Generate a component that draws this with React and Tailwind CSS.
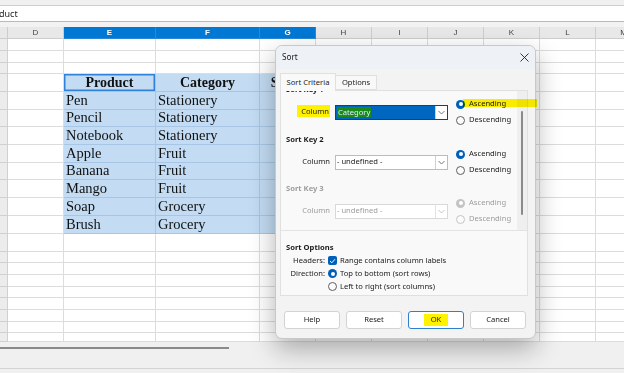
import React from 'react';

const cols = [
  { k: 'rn', w: 'w-[8px]', head: '' },
  { k: 'D', w: 'w-[56px]', head: 'D' },
  { k: 'E', w: 'w-[92px]', head: 'E', sel: true },
  { k: 'F', w: 'w-[104px]', head: 'F', sel: true },
  { k: 'G', w: 'w-[56px]', head: 'G', sel: true },
  { k: 'H', w: 'w-[56px]', head: 'H' },
  { k: 'I', w: 'w-[56px]', head: 'I' },
  { k: 'J', w: 'w-[56px]', head: 'J' },
  { k: 'K', w: 'w-[56px]', head: 'K' },
  { k: 'L', w: 'w-[56px]', head: 'L' },
  { k: 'M', w: 'w-[56px]', head: 'M' },
];

const table = [
  ['Product', 'Category', 'Stock'],
  ['Pen', 'Stationery', ''],
  ['Pencil', 'Stationery', ''],
  ['Notebook', 'Stationery', ''],
  ['Apple', 'Fruit', ''],
  ['Banana', 'Fruit', ''],
  ['Mango', 'Fruit', ''],
  ['Soap', 'Grocery', ''],
  ['Brush', 'Grocery', ''],
];

// row heights, table rows marked with index into table
const rows = [
  { h: 'h-[12px]' },
  { h: 'h-[12px]' },
  { h: 'h-[11px]' },
  { h: 'h-[18px]', t: 0 },
  { h: 'h-[18px]', t: 1 },
  { h: 'h-[17px]', t: 2 },
  { h: 'h-[18px]', t: 3 },
  { h: 'h-[18px]', t: 4 },
  { h: 'h-[17px]', t: 5 },
  { h: 'h-[18px]', t: 6 },
  { h: 'h-[18px]', t: 7 },
  { h: 'h-[18px]', t: 8 },
  { h: 'h-[18px]' },
  { h: 'h-[11px]' },
  { h: 'h-[12px]' },
  { h: 'h-[12px]' },
  { h: 'h-[11px]' },
  { h: 'h-[12px]' },
  { h: 'h-[12px]' },
  { h: 'h-[11px]' },
  { h: 'h-[9px]' },
];

function SheetRow({ row }) {
  const inTable = row.t !== undefined;
  return (
    <div className={`flex shrink-0 ${row.h}`}>
      {cols.map((c, ci) => {
        if (c.k === 'rn') {
          return <div key={c.k} className={`${c.w} shrink-0 bg-[#ececec] border-r border-b border-[#d0d0d0]`} />;
        }
        const sel = inTable && c.sel;
        const text = sel ? table[row.t][ci - 2] : '';
        const header = row.t === 0;
        const active = header && c.k === 'E';
        return (
          <div
            key={c.k}
            className={`${c.w} shrink-0 border-r border-b overflow-hidden whitespace-nowrap flex items-center font-['Liberation_Serif',serif] text-[#111] ${
              sel ? 'bg-[#c3dcf3] border-[#a7c6e5]' : 'border-[#dcdcdc]'
            } ${header ? 'justify-center font-bold text-[14px]' : 'pl-[2px] text-[14.5px]'} ${
              active ? 'shadow-[inset_0_0_0_1.5px_#2f82d9]' : ''
            }`}
          >
            {text}
          </div>
        );
      })}
    </div>
  );
}

function Radio({ on, disabled }) {
  if (on) {
    return (
      <span
        className={`w-[9px] h-[9px] rounded-full flex items-center justify-center shrink-0 ${
          disabled ? 'bg-[#c4c4c4]' : 'bg-[#005fb8]'
        }`}
      >
        <span className="w-[4px] h-[4px] rounded-full bg-white" />
      </span>
    );
  }
  return (
    <span
      className={`block w-[9px] h-[9px] rounded-full border shrink-0 bg-[#fbfbfb] ${
        disabled ? 'border-[#c4c4c4]' : 'border-[#5f5f5f]'
      }`}
    />
  );
}

function Chevron({ color = '#666' }) {
  return (
    <svg width="7" height="5" viewBox="0 0 7 5">
      <path d="M0.5 1 L3.5 4 L6.5 1" fill="none" stroke={color} strokeWidth="0.9" />
    </svg>
  );
}

function Select({ children, active, disabled }) {
  return (
    <div
      className={`w-[113px] h-[15px] shrink-0 flex bg-white border ${
        active ? 'border-[#3a3a3a]' : disabled ? 'border-[#d9d9d9]' : 'border-[#bcbcbc]'
      }`}
    >
      <div className={`flex-1 flex items-center pl-[1px] ${active ? 'bg-[#0067c0]' : ''}`}>{children}</div>
      <div className={`w-[12px] flex items-center justify-center border-l ${disabled ? 'border-[#e2e2e2]' : 'border-[#cfcfcf]'}`}>
        <Chevron color={disabled ? '#bdbdbd' : '#666'} />
      </div>
    </div>
  );
}

function KeyBlock({ label, select, disabled, asc = true }) {
  const tone = disabled ? 'text-[#9d9d9d]' : '';
  return (
    <div className={`h-[32px] flex items-center ${tone}`}>
      <div className="w-[44px] text-right shrink-0">{label}</div>
      <div className="ml-[5px]">{select}</div>
      <div className="ml-[8px] flex flex-col">
        <div className="h-[16px] flex items-center gap-[4px]">
          <Radio on={asc} disabled={disabled} />
          <span>Ascending</span>
        </div>
        <div className="h-[16px] flex items-center gap-[4px]">
          <Radio disabled={disabled} />
          <span>Descending</span>
        </div>
      </div>
    </div>
  );
}

function Button({ children, primary }) {
  return (
    <div
      className={`w-[56px] h-[18px] rounded-[3px] bg-white border flex items-center justify-center ${
        primary ? 'border-[#2f7fcf]' : 'border-[#d3d3d3]'
      }`}
    >
      {children}
    </div>
  );
}

function SortDialog() {
  return (
    <div className="absolute left-[275px] top-[45px] w-[261px] h-[294px] rounded-[7px] bg-[#f3f3f3] border border-[#c8c8c8] shadow-[0_10px_26px_rgba(0,0,0,0.3)] flex flex-col text-[#1b1b1b] text-[7.6px] font-['Noto_Sans',sans-serif]">
      {/* title bar */}
      <div className="h-[23px] shrink-0 flex items-center justify-between pl-[6px] pr-[6px] bg-[#eef2f7] rounded-t-[7px]">
        <span className="text-[8.2px]">Sort</span>
        <svg width="9" height="9" viewBox="0 0 9 9">
          <path d="M0.5 0.5 L8.5 8.5 M8.5 0.5 L0.5 8.5" stroke="#222" strokeWidth="0.9" />
        </svg>
      </div>

      {/* tabs */}
      <div className="mt-[4px] ml-[4px] h-[17px] flex items-end shrink-0">
        <div className="relative z-10 -mb-px w-[56px] h-[18px] bg-[#f9f9f9] border border-b-0 border-[#e0e0e0] flex items-center justify-center">
          Sort Criteria
        </div>
        <div className="w-[41px] h-[15px] bg-[#f8f8f8] border border-l-0 border-[#e0e0e0] flex items-center justify-center">
          Options
        </div>
      </div>

      {/* panel */}
      <div className="ml-[4px] w-[248px] h-[206px] shrink-0 bg-[#f9f9f9] border border-[#e0e0e0] flex flex-col">
        <div className="h-[139px] flex overflow-hidden">
          <div className="flex-1 pl-[5px] -mt-[7px]">
            <div className="h-[12px] flex items-center font-bold">Sort Key 1</div>
            <KeyBlock
              label={<span className="bg-[#fff200] pl-[4px] pr-[1px] py-[1px]">Column</span>}
              select={
                <Select active>
                  <span className="bg-[#1b8a1b] text-[#dcefff] px-[1px] leading-[10px]">Category</span>
                </Select>
              }
            />
            <div className="mt-[6px] h-[12px] flex items-center font-bold">Sort Key 2</div>
            <KeyBlock
              label="Column"
              select={
                <Select>
                  <span>- undefined -</span>
                </Select>
              }
            />
            <div className="mt-[5px] h-[12px] flex items-center font-bold text-[#9d9d9d]">Sort Key 3</div>
            <KeyBlock
              disabled
              label="Column"
              select={
                <Select disabled>
                  <span>- undefined -</span>
                </Select>
              }
            />
          </div>
          <div className="w-[10px] bg-[#efefef] flex justify-center">
            <div className="mt-[20px] w-[2px] h-[104px] rounded-full bg-[#8a8a8a]" />
          </div>
        </div>

        <div className="flex-1 border-t border-[#e3e3e3] pl-[5px] pt-[11px]">
          <div className="h-[12px] flex items-center font-bold">Sort Options</div>
          <div className="h-[13px] flex items-center">
            <div className="w-[39px] text-right">Headers:</div>
            <span className="ml-[3px] w-[9px] h-[9px] rounded-[2px] bg-[#005fb8] flex items-center justify-center">
              <svg width="7" height="6" viewBox="0 0 7 6">
                <path d="M1 3 L2.8 4.8 L6 1.2" fill="none" stroke="#fff" strokeWidth="1" />
              </svg>
            </span>
            <span className="ml-[3px]">Range contains column labels</span>
          </div>
          <div className="h-[13px] flex items-center">
            <div className="w-[39px] text-right">Direction:</div>
            <span className="ml-[3px]">
              <Radio on />
            </span>
            <span className="ml-[3px]">Top to bottom (sort rows)</span>
          </div>
          <div className="h-[13px] flex items-center">
            <div className="w-[39px]" />
            <span className="ml-[3px]">
              <Radio />
            </span>
            <span className="ml-[3px]">Left to right (sort columns)</span>
          </div>
        </div>
      </div>

      {/* buttons */}
      <div className="mt-[15px] ml-[8px] flex gap-[6px]">
        <Button>Help</Button>
        <Button>Reset</Button>
        <Button primary>
          <span className="bg-[#fff200] px-[7px]">OK</span>
        </Button>
        <Button>Cancel</Button>
      </div>

      {/* highlighter stroke over Ascending */}
      <div className="absolute left-[187px] top-[53px] w-[74px] h-[8px] bg-[#fff200] mix-blend-multiply" />
    </div>
  );
}

export default function App() {
  return (
    <div className="relative w-[624px] h-[373px] overflow-hidden bg-white flex flex-col font-['Liberation_Sans',sans-serif]">
      {/* toolbar edge + formula bar */}
      <div className="h-[6px] shrink-0 bg-[#f0f0f0] border-b border-[#cfcfcf]" />
      <div className="h-[16px] shrink-0 bg-white border-b border-[#b9b9b9] flex items-center text-[9px] text-[#222] font-['Noto_Sans',sans-serif]">
        <span className="-ml-[1px]">duct</span>
      </div>
      <div className="h-[5px] shrink-0 bg-[#f2f2f2]" />

      {/* column headers */}
      <div className="h-[12px] flex shrink-0">
        {cols.map((c) => (
          <div
            key={c.k}
            className={`${c.w} shrink-0 border-r border-b flex items-center justify-center text-[8px] ${
              c.sel ? 'bg-[#0078d4] border-[#2b88d8] text-white font-bold' : 'bg-[#e8e8e8] border-[#cdcdcd] text-[#444]'
            }`}
          >
            {c.head}
          </div>
        ))}
      </div>

      {/* sheet rows */}
      <div className="flex flex-col shrink-0">
        {rows.map((r, i) => (
          <SheetRow key={i} row={r} />
        ))}
      </div>

      {/* sheet tabs / scroll area */}
      <div className="flex-1 bg-[#f0f0f0] flex flex-col">
        <div className="mt-[5px] w-[229px] h-[2px] bg-[#8a8a8a]" />
        <div className="mt-auto mb-[4px] border-b border-[#d4d4d4]" />
      </div>

      <SortDialog />
    </div>
  );
}
